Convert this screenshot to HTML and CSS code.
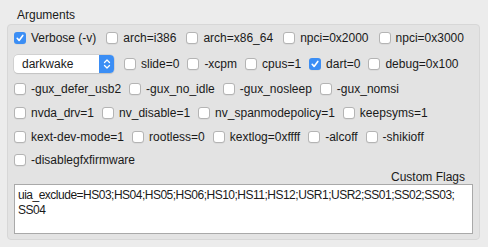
FILE: index.html
```html
<!DOCTYPE html>
<html lang="en">
<head>
  <meta charset="UTF-8" />
  <title>Arguments</title>
  <link rel="stylesheet" href="styles.css">
</head>
<body>
  <div class="group-title">Arguments</div>

  <div class="group-box">
    <div class="row row-tall row-wide">
      <label class="check"><span class="box checked"></span>Verbose (-v)</label>
      <label class="check"><span class="box"></span>arch=i386</label>
      <label class="check"><span class="box"></span>arch=x86_64</label>
      <label class="check"><span class="box"></span>npci=0x2000</label>
      <label class="check"><span class="box"></span>npci=0x3000</label>
    </div>

    <div class="row row-tall">
      <div class="popup">
        <span class="popup-text">darkwake</span>
        <span class="popup-arrows">
          <svg width="8" height="12" viewBox="0 0 8 12">
            <path d="M1.5 4.5 L4 2 L6.5 4.5 M1.5 7.5 L4 10 L6.5 7.5" fill="none" stroke="#fff" stroke-width="1.3" stroke-linecap="round" stroke-linejoin="round"/>
          </svg>
        </span>
      </div>
      <label class="check"><span class="box"></span>slide=0</label>
      <label class="check"><span class="box"></span>-xcpm</label>
      <label class="check"><span class="box"></span>cpus=1</label>
      <label class="check"><span class="box checked"></span>dart=0</label>
      <label class="check"><span class="box"></span>debug=0x100</label>
    </div>

    <div class="row row-mid">
      <label class="check"><span class="box"></span>-gux_defer_usb2</label>
      <label class="check"><span class="box"></span>-gux_no_idle</label>
      <label class="check"><span class="box"></span>-gux_nosleep</label>
      <label class="check"><span class="box"></span>-gux_nomsi</label>
    </div>

    <div class="row row-mid">
      <label class="check"><span class="box"></span>nvda_drv=1</label>
      <label class="check"><span class="box"></span>nv_disable=1</label>
      <label class="check"><span class="box"></span>nv_spanmodepolicy=1</label>
      <label class="check"><span class="box"></span>keepsyms=1</label>
    </div>

    <div class="row">
      <label class="check"><span class="box"></span>kext-dev-mode=1</label>
      <label class="check"><span class="box"></span>rootless=0</label>
      <label class="check"><span class="box"></span>kextlog=0xffff</label>
      <label class="check"><span class="box"></span>-alcoff</label>
      <label class="check"><span class="box"></span>-shikioff</label>
    </div>

    <div class="row">
      <label class="check"><span class="box"></span>-disablegfxfirmware</label>
    </div>

    <div class="flags-label">Custom Flags</div>
    <div class="flags-box">uia_exclude=HS03;HS04;HS05;HS06;HS10;HS11;HS12;USR1;USR2;SS01;SS02;SS03;<br>SS04</div>
  </div>
</body>
</html>
```

FILE: styles.css
```css
body {
  margin: 0;
  padding: 8px 7px 0 7px;
  background: #ececec;
  font-family: 'Liberation Sans', Arial, sans-serif;
  font-size: 12px;
  color: #1a1a1a;
}
.group-title {
  margin-left: 10px;
  height: 14px;
  line-height: 14px;
}
.group-box {
  margin-top: 2px;
  width: 471px;
  height: 214px;
  background: #e3e3e3;
  border: 1px solid #d7d7d7;
  border-radius: 4px;
}
.row {
  display: flex;
  align-items: center;
  gap: 8px;
  height: 23px;
  padding-left: 6px;
}
.row-tall {
  height: 26px;
}
.row-mid {
  height: 24px;
}
.row-wide {
  gap: 10px;
}
.check {
  display: flex;
  align-items: center;
  gap: 5px;
  white-space: nowrap;
}
.box {
  width: 12px;
  height: 12px;
  box-sizing: border-box;
  background: #fff;
  border: 1px solid #b4b4b4;
  border-radius: 3px;
  box-shadow: 0 0.5px 0.5px rgba(0, 0, 0, 0.08);
}
.box.checked {
  border: none;
  background: #3b8ef5 url("data:image/svg+xml;utf8,<svg xmlns='http://www.w3.org/2000/svg' width='12' height='12' viewBox='0 0 12 12'><path d='M3.2 6.3 L5.1 8.4 L8.8 3.4' fill='none' stroke='white' stroke-width='1.6' stroke-linecap='round' stroke-linejoin='round'/></svg>") no-repeat center;
}
.popup {
  display: flex;
  align-items: center;
  width: 100px;
  height: 18px;
  background: #fff;
  border-radius: 4px;
  box-shadow: 0 0 0 0.5px #c0c0c0, 0 1px 1px rgba(0, 0, 0, 0.12);
  margin-right: 2px;
}
.popup-text {
  flex: 1;
  padding-left: 8px;
}
.popup-arrows {
  width: 15px;
  height: 18px;
  display: flex;
  align-items: center;
  justify-content: center;
  background: #3b8ef5;
  border-radius: 0 4px 4px 0;
}
.flags-label {
  text-align: right;
  padding-right: 14px;
  height: 13px;
  line-height: 13px;
}
.flags-box {
  margin: 0 0 0 6px;
  width: 459px;
  height: 50px;
  box-sizing: border-box;
  background: #fff;
  border: 1px solid #a9a9a9;
  padding: 3px 3px;
  line-height: 14.5px;
  letter-spacing: -0.5px;
  white-space: nowrap;
}
```
